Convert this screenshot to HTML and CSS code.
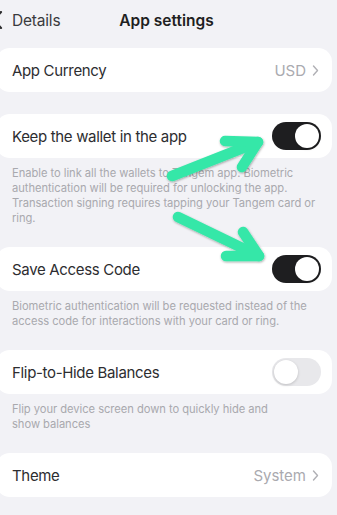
FILE: index.html
```html
<!DOCTYPE html>
<html lang="en">
<head>
<meta charset="utf-8">
<title>App settings</title>
<link rel="stylesheet" href="styles.css">
</head>
<body>
<div class="screen">
  <header class="nav">
    <div class="back">
      <svg class="back-chev" width="10" height="18" viewBox="0 0 10 18"><path d="M8 1 L1 9 L8 17" fill="none" stroke="#2c2c2e" stroke-width="2.2" stroke-linecap="round" stroke-linejoin="round"/></svg>
      <span>Details</span>
    </div>
    <div class="title">App settings</div>
    <div></div>
  </header>

  <main class="list">
    <section class="group">
      <div class="card">
        <span class="label">App Currency</span>
        <span class="value">USD <svg class="chev" width="7" height="11" viewBox="0 0 7 11"><path d="M1.5 1 L5.5 5.5 L1.5 10" fill="none" stroke="#b0b0b5" stroke-width="1.4" stroke-linecap="round" stroke-linejoin="round"/></svg></span>
      </div>
    </section>

    <section class="group">
      <div class="card">
        <span class="label">Keep the wallet in the app</span>
        <span class="toggle on"><span class="knob"></span></span>
      </div>
      <p class="note">Enable to link all the wallets to Tangem app. Biometric authentication will be required for unlocking the app. Transaction signing requires tapping your Tangem card or ring.</p>
    </section>

    <section class="group">
      <div class="card">
        <span class="label">Save Access Code</span>
        <span class="toggle on"><span class="knob"></span></span>
      </div>
      <p class="note">Biometric authentication will be requested instead of the access code for interactions with your card or ring.</p>
    </section>

    <section class="group">
      <div class="card">
        <span class="label">Flip-to-Hide Balances</span>
        <span class="toggle"><span class="knob"></span></span>
      </div>
      <p class="note">Flip your device screen down to quickly hide and<br>show balances</p>
    </section>

    <section class="group">
      <div class="card">
        <span class="label">Theme</span>
        <span class="value">System <svg class="chev" width="7" height="11" viewBox="0 0 7 11"><path d="M1.5 1 L5.5 5.5 L1.5 10" fill="none" stroke="#b0b0b5" stroke-width="1.4" stroke-linecap="round" stroke-linejoin="round"/></svg></span>
      </div>
    </section>
  </main>

  <svg class="arrows" width="337" height="515" viewBox="0 0 337 515">
    <defs>
      <filter id="sh" x="-20%" y="-20%" width="140%" height="140%">
        <feDropShadow dx="0.5" dy="1" stdDeviation="1.2" flood-color="#000" flood-opacity="0.35"/>
      </filter>
    </defs>
    <g fill="none" stroke="#36e7a8" stroke-width="10.5" stroke-linecap="round" stroke-linejoin="round" filter="url(#sh)">
      <path d="M172 176 L258 142"/>
      <path d="M225 141 L258 142 L242 167"/>
      <path d="M178 217 L259 256"/>
      <path d="M243 232 L259 256 L226 256"/>
    </g>
  </svg>
</div>
</body>
</html>
```

FILE: styles.css
```css
html, body {
  margin: 0;
  padding: 0;
}
body {
  background: #f2f2f6;
  font-family: Inter, "Noto Sans", sans-serif;
  color: #2b2b2e;
  width: 337px;
  height: 515px;
  overflow: hidden;
}
.screen {
  position: relative;
  width: 337px;
  height: 515px;
}
.nav {
  display: grid;
  grid-template-columns: 1fr auto 1fr;
  align-items: center;
  height: 40px;
  width: 333px;
  font-size: 15.5px;
}
.back {
  display: flex;
  align-items: center;
  gap: 9px;
  color: #3a3a3d;
  letter-spacing: -0.2px;
}
.back-chev {
  margin-left: -7px;
}
.title {
  font-weight: 600;
  color: #1f1f22;
}
.list {
  margin: 8px 5px 0 -4px;
}
.group {
  margin-bottom: 22px;
}
.card {
  background: #fff;
  border-radius: 14px;
  height: 44px;
  padding: 0 11px 0 16px;
  display: flex;
  align-items: center;
  justify-content: space-between;
}
.label {
  font-size: 15px;
  letter-spacing: -0.33px;
  color: #2d2d30;
}
.value {
  font-size: 15px;
  color: #aaaaaf;
  display: flex;
  align-items: center;
  gap: 6px;
  padding-right: 2px;
}
.toggle {
  width: 49px;
  height: 28px;
  border-radius: 14px;
  background: #e8e8eb;
  display: flex;
  align-items: center;
  padding: 0 2px;
  box-sizing: border-box;
}
.toggle .knob {
  width: 24px;
  height: 24px;
  border-radius: 50%;
  background: #fff;
  box-shadow: 0 1px 3px rgba(0,0,0,0.18);
}
.toggle.on {
  background: #1e1e20;
  justify-content: flex-end;
}
.note {
  margin: 0;
  padding: 8px 6px 0 16px;
  font-size: 11.2px;
  letter-spacing: -0.05px;
  line-height: 15px;
  color: #a9a9ae;
}
.group:has(.note) {
  margin-bottom: 21px;
}
.arrows {
  position: absolute;
  left: 0;
  top: 0;
  pointer-events: none;
}
```
